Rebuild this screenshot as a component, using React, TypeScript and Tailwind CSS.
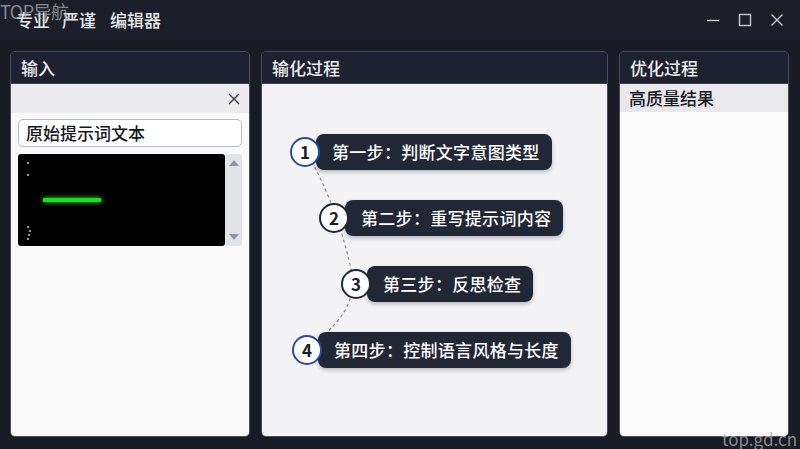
import React from "react";

const FONT = { fontFamily: '"Noto Sans CJK SC", "Noto Sans", sans-serif' };

const STEPS = [
  { n: "1", label: "第一步：判断文字意图类型", offset: "ml-[28px]", ring: "border-[#2b4aa6]" },
  { n: "2", label: "第二步：重写提示词内容", offset: "ml-[57px]", ring: "border-[#232838]" },
  { n: "3", label: "第三步：反思检查", offset: "ml-[79px]", ring: "border-[#232838]" },
  { n: "4", label: "第四步：控制语言风格与长度", offset: "ml-[30px]", ring: "border-[#2b4aa6]" },
];

function PanelHeader({ title }: { title: string }) {
  return (
    <div className="h-[32px] shrink-0 flex items-center px-[10px] bg-[#1e2230] border-b border-[#3d4150] text-[17px] font-medium text-[#ececee]">
      {title}
    </div>
  );
}

function Step({ n, label, offset, ring }: (typeof STEPS)[number]) {
  return (
    <div className={`flex items-center ${offset}`}>
      <div
        className={`relative z-10 w-[30px] h-[30px] rounded-full bg-white border-2 ${ring} flex items-center justify-center text-[17px] font-semibold text-[#1a1d28]`}
      >
        {n}
      </div>
      <div className="-ml-[4px] h-[36px] flex items-center rounded-[8px] bg-[#222735] pl-[16px] pr-[12px] text-[17px] font-medium tracking-[0.3px] text-white shadow-[0_2px_4px_rgba(0,0,0,0.25)]">
        {label}
      </div>
    </div>
  );
}

export default function App() {
  return (
    <div className="relative w-[800px] h-[449px] overflow-hidden bg-[#191c25] flex flex-col" style={FONT}>
      {/* title bar */}
      <div className="h-[40px] shrink-0 flex items-center justify-between bg-[#1c1f29] pl-[16px] pr-[16px]">
        <div className="flex items-center gap-[12px] text-[17px] font-medium text-[#e6e7ea]">
          <span>专业</span>
          <span>严谨</span>
          <span className="ml-[2px]">编辑器</span>
        </div>
        <div className="flex items-center gap-[18px] text-[#c9cbd1]">
          <svg width="14" height="14" viewBox="0 0 14 14">
            <path d="M1 7.5h12" stroke="currentColor" strokeWidth="1.4" />
          </svg>
          <svg width="14" height="14" viewBox="0 0 14 14">
            <rect x="1.5" y="1.5" width="11" height="11" fill="none" stroke="currentColor" strokeWidth="1.4" />
          </svg>
          <svg width="14" height="14" viewBox="0 0 14 14">
            <path d="M1.5 1.5l11 11M12.5 1.5l-11 11" stroke="currentColor" strokeWidth="1.4" />
          </svg>
        </div>
      </div>

      {/* panels */}
      <div className="flex-1 flex gap-[11px] pt-[11px] pb-[12px] pl-[10px] pr-[11px]">
        {/* input */}
        <div className="w-[240px] flex flex-col rounded-[5px] border border-[#4a4e5b] overflow-hidden">
          <PanelHeader title="输入" />
          <div className="flex-1 flex flex-col bg-[#fafafa]">
            <div className="h-[29px] shrink-0 flex items-center justify-end pr-[9px] bg-[#ececef]">
              <svg width="12" height="12" viewBox="0 0 12 12" className="text-[#3a3d46]">
                <path d="M1 1l10 10M11 1L1 11" stroke="currentColor" strokeWidth="1.4" />
              </svg>
            </div>
            <div className="px-[7px] pt-[6px] flex flex-col gap-[7px]">
              <div className="h-[28px] flex items-center rounded-[5px] border border-[#b9bcc4] bg-white px-[7px] text-[17px] font-medium text-[#15171c]">
                原始提示词文本
              </div>
              <div className="h-[92px] flex">
                <div className="relative flex-1 bg-black rounded-[3px]">
                  <span className="absolute left-[9px] top-[8px] w-[2px] h-[2px] bg-[#9a9a9a]" />
                  <span className="absolute left-[9px] top-[20px] w-[2px] h-[2px] bg-[#9a9a9a]" />
                  <span className="absolute left-[9px] top-[72px] w-[2px] h-[2px] bg-[#9a9a9a]" />
                  <span className="absolute left-[11px] top-[76px] w-[2px] h-[2px] bg-[#9a9a9a]" />
                  <span className="absolute left-[10px] top-[80px] w-[2px] h-[2px] bg-[#9a9a9a]" />
                  <span className="absolute left-[9px] top-[84px] w-[2px] h-[2px] bg-[#9a9a9a]" />
                  <div className="absolute left-[25px] top-[44px] w-[58px] h-[4px] rounded-[1px] bg-[#1fe01f] shadow-[0_0_5px_#22ff22]" />
                </div>
                <div className="w-[17px] flex flex-col justify-between items-center py-[6px] bg-[#e2e3e7] rounded-[3px]">
                  <svg width="10" height="6" viewBox="0 0 10 6">
                    <path d="M5 0L10 6H0z" fill="#8d97ab" />
                  </svg>
                  <svg width="10" height="6" viewBox="0 0 10 6">
                    <path d="M5 6L10 0H0z" fill="#8d97ab" />
                  </svg>
                </div>
              </div>
            </div>
          </div>
        </div>

        {/* process */}
        <div className="w-[347px] flex flex-col rounded-[5px] border border-[#4a4e5b] overflow-hidden">
          <PanelHeader title="输化过程" />
          <div className="relative flex-1 bg-[#f3f3f5]">
            <svg className="absolute inset-0" width="347" height="354" viewBox="0 0 347 354">
              <path
                d="M50 78 C62 100, 80 140, 90 190 C94 225, 72 240, 56 258"
                fill="none"
                stroke="#7c818d"
                strokeWidth="1.1"
                strokeDasharray="3 3"
              />
            </svg>
            <div className="relative flex flex-col gap-[30px] pt-[50px]">
              {STEPS.map((s) => (
                <Step key={s.n} {...s} />
              ))}
            </div>
          </div>
        </div>

        {/* result */}
        <div className="flex-1 flex flex-col rounded-[5px] border border-[#4a4e5b] overflow-hidden">
          <PanelHeader title="优化过程" />
          <div className="flex-1 flex flex-col bg-[#fbfbfb]">
            <div className="h-[28px] flex items-center px-[9px] bg-[#e9e9ec] text-[17px] font-medium text-[#15171c]">
              高质量结果
            </div>
          </div>
        </div>
      </div>

      {/* watermarks */}
      <div className="absolute left-[0px] top-[0px] leading-[22px] text-[18px] text-[#b7b9bf]/70 tracking-[-0.5px]">TOP导航</div>
      <div className="absolute right-[3px] bottom-[0px] leading-[20px] text-[17px] text-[#a7a9b0]/80">top.gd.cn</div>
    </div>
  );
}
